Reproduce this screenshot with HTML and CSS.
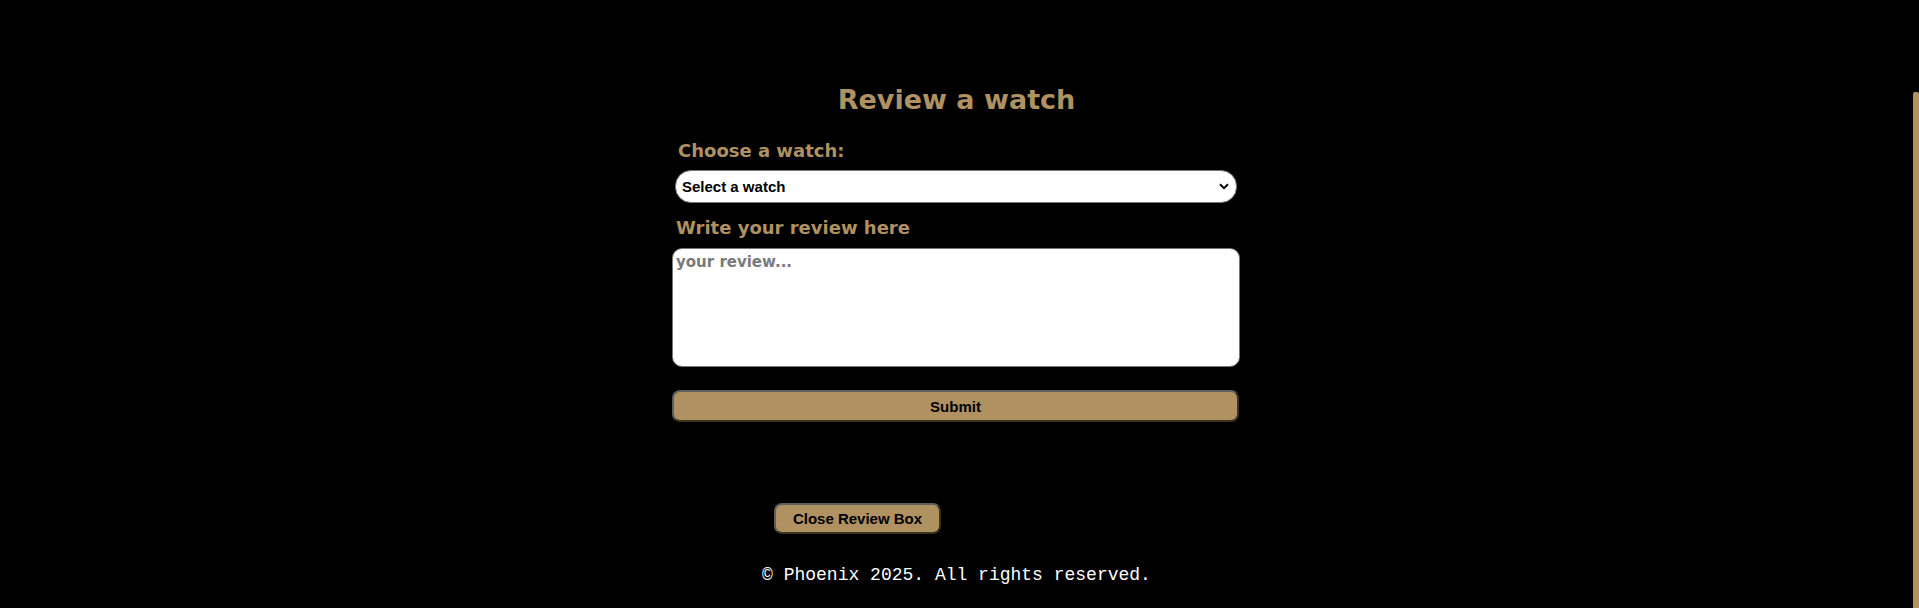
FILE: index.html
```html
<!DOCTYPE html>
<html lang="en">
<head>
<meta charset="utf-8">
<title>Review a watch</title>
<link rel="stylesheet" href="styles.css">
</head>
<body>
<main class="page">
  <section class="review">
    <h2 class="review-title">Review a watch</h2>
    <form class="review-form">
      <label class="field-label label-choose" for="watch">Choose a watch:</label>
      <div class="select-wrap">
        <select id="watch" class="watch-select">
          <option>Select a watch</option>
          <option>Phoenix Classic</option>
          <option>Phoenix Diver</option>
          <option>Phoenix Chrono</option>
        </select>
        <svg class="select-arrow" width="10" height="7" viewBox="0 0 10 7" aria-hidden="true">
          <path d="M1 1.2 L5 5.2 L9 1.2" fill="none" stroke="#000" stroke-width="2"/>
        </svg>
      </div>
      <label class="field-label label-write" for="review">Write your review here</label>
      <textarea id="review" class="review-text" placeholder="your review..."></textarea>
      <button type="button" class="btn btn-submit">Submit</button>
    </form>
    <div class="close-row">
      <button type="button" class="btn btn-close">Close Review Box</button>
    </div>
  </section>
  <footer class="footer">© Phoenix 2025. All rights reserved.</footer>
</main>
<div class="scroll-thumb" aria-hidden="true"></div>
</body>
</html>
```

FILE: styles.css
```css
html {
  background: #000;
}
body {
  margin: 0;
  background: #000;
  color: #b09162;
  font-family: "DejaVu Sans", Verdana, sans-serif;
  font-size: 18px;
}
.page {
  width: calc(100% - 9px);
  padding-top: 84px;
  padding-bottom: 22px;
}
.scroll-thumb {
  position: fixed;
  top: 92px;
  right: 0;
  bottom: 0;
  width: 6px;
  background: #b09162;
  border-radius: 2px 2px 0 0;
}
.review {
  width: 566px;
  margin: 0 auto;
}
.review-title {
  margin: 0 0 24px;
  padding-left: 3px;
  text-align: center;
  font-size: 27px;
  line-height: 32px;
  font-weight: bold;
}
.review-form {
  display: flex;
  flex-direction: column;
  align-items: flex-start;
}
.field-label {
  display: block;
  font-size: 18px;
  line-height: 22px;
  font-weight: bold;
}
.label-choose {
  margin-left: 6px;
  margin-bottom: 8px;
}
.label-write {
  margin: 14px 0 9px 4px;
}
.select-wrap {
  position: relative;
  margin-left: 3px;
  display: flex;
}
.watch-select {
  appearance: none;
  -webkit-appearance: none;
  box-sizing: border-box;
  width: 562px;
  height: 33px;
  margin: 0;
  padding: 0 28px 0 6px;
  background: #fff;
  color: #000;
  border: 1px solid #767676;
  border-radius: 16px;
  font-family: "Liberation Sans", Arial, sans-serif;
  font-size: 15px;
  font-weight: bold;
}
.select-arrow {
  position: absolute;
  right: 8px;
  top: 13px;
  pointer-events: none;
}
.review-text {
  box-sizing: border-box;
  width: 568px;
  height: 119px;
  margin: 0;
  padding: 4px 3px 2px;
  background: #fff;
  border: 1px solid #767676;
  border-radius: 10px;
  resize: none;
  font-family: "DejaVu Sans", Verdana, sans-serif;
  font-size: 15px;
  font-weight: bold;
}
.review-text::placeholder {
  color: #7a7a7a;
}
.btn {
  box-sizing: border-box;
  background: #b09162;
  color: #000;
  border: 2px solid;
  border-color: #5e5e5e #3c3220 #3c3220 #5e5e5e;
  font-family: "Liberation Sans", Arial, sans-serif;
  font-size: 15px;
  font-weight: bold;
}
.btn-submit {
  width: 567px;
  height: 32px;
  margin-top: 23px;
  border-radius: 8px;
}
.close-row {
  margin-top: 81px;
  padding-left: 102px;
}
.btn-close {
  width: 167px;
  height: 31px;
  border-radius: 8px;
}
.footer {
  margin-top: 31px;
  padding-left: 3px;
  text-align: center;
  color: #fff;
  font-family: "Liberation Mono", "Courier New", monospace;
  font-size: 18px;
  line-height: 20px;
}
```
